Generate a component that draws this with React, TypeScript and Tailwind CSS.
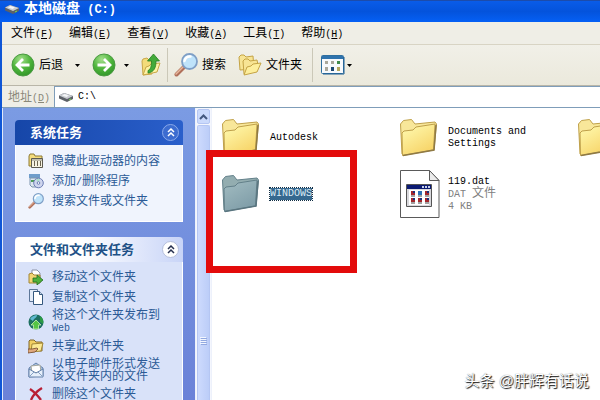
import type { ReactNode } from 'react'

// the half-width glyphs are half as wide as a Chinese character
function En({ children }: { children: ReactNode }) {
  return <span className="font-['Liberation_Mono',monospace] text-[10px] leading-none">{children}</span>
}

function DriveIcon() {
  return (
    <svg width="16" height="12" viewBox="0 0 16 12" aria-hidden="true">
      <path d="M1 4.500 6 2l9 3v3L9 11 1 7.500z" fill="#5d6168" />
      <path d="M1 4.500 6 2l9 3-6 3z" fill="#c9ccd1" />
      <path d="M4 4.500 6.500 3l4.500 1.500-2.500 1.500z" fill="#f5f6f8" />
      <path d="M11 8.500l2-1v1l-2 1z" fill="#7be04d" />
    </svg>
  )
}

function RoundArrow({ back }: { back?: boolean }) {
  return (
    <svg width="24" height="24" viewBox="0 0 24 24" aria-hidden="true">
      <defs>
        <radialGradient id={back ? 'orbBack' : 'orbNext'} cx=".4" cy=".25" r=".85">
          <stop offset="0" stopColor="#a4e08c" />
          <stop offset=".5" stopColor="#4fb53c" />
          <stop offset="1" stopColor="#2c8f25" />
        </radialGradient>
      </defs>
      <circle cx="12" cy="12" r="11" fill={back ? 'url(#orbBack)' : 'url(#orbNext)'} stroke="#4b9a42" />
      <path
        d={back ? 'M18.500 12H7M12 6 6 12l6 6' : 'M5.500 12H17M12 6l6 6-6 6'}
        fill="none"
        stroke="#fff"
        strokeWidth="2.800"
      />
    </svg>
  )
}

function UpFolderIcon() {
  return (
    <svg width="20" height="24" viewBox="0 0 20 24" aria-hidden="true">
      <path d="M2 22 1 8l1-2 4-1 2 2 3 0v14z" fill="#f3dc7a" stroke="#c9a748" />
      <path d="M2 22l3-8 3-1 2-2 9-1-3 9z" fill="#fdf3a6" stroke="#c9a748" strokeLinejoin="round" />
      <path d="M7 17.500c2.500-1 3.500-4 3.500-9.500H6.500l6-7 6 7h-3.500c0 7-2 11-8 12z" fill="#43aa3a" stroke="#24801f" strokeWidth=".8" />
    </svg>
  )
}

function SearchIcon({ size }: { size: number }) {
  return (
    <svg width={size} height={size} viewBox="0 0 24 24" aria-hidden="true">
      <path d="M2.500 21.500l8-8" stroke="#b0705a" strokeWidth="4" strokeLinecap="round" />
      <path d="M2 21l7-7" stroke="#e8b79c" strokeWidth="1.500" strokeLinecap="round" />
      <circle cx="15.500" cy="8.500" r="7.500" fill="#bfe3fa" stroke="#7f9fc6" strokeWidth="1.800" />
      <path d="M10.500 8a5 5 0 0 1 6-4.500" fill="none" stroke="#fff" strokeWidth="2.500" strokeLinecap="round" />
    </svg>
  )
}

function FoldersIcon() {
  return (
    <svg width="24" height="22" viewBox="0 0 24 22" aria-hidden="true">
      <g stroke="#c4a345" strokeLinejoin="round">
        <path d="M2 16 1 3l2-2h3l2 2 7-1 1 13z" fill="#f7e494" />
        <path d="M6 20 5 7l2-2h3l2 2 7-1 1 5" fill="#f7e494" />
        <path d="M6 21l3-8 4-1 2-2 8-1-4 9z" fill="#fdee9c" />
      </g>
    </svg>
  )
}

function ViewsIcon() {
  return (
    <svg width="24" height="20" viewBox="0 0 24 20" aria-hidden="true">
      <rect x=".5" y=".5" width="22" height="18" rx="1" fill="#f7f9fc" stroke="#2f6f9f" />
      <path d="M1 1h21v3H1z" fill="#2f73ad" />
      <path d="M23 2v17H2" fill="none" stroke="#1f5f92" />
      <path d="M4 6h3v3H4zM10 6h3v3h-3zM4 12h3v4H4z" fill="#a9a79b" />
      <path d="M16 6h3v3h-3z" fill="#3f8a4c" />
      <path d="M10 12h3v4h-3z" fill="#1b4773" />
      <path d="M16 12h3v4h-3z" fill="#b5a75c" />
    </svg>
  )
}

function Caret() {
  return (
    <svg width="5" height="3" viewBox="0 0 5 3" aria-hidden="true">
      <path d="M0 0h5L2.500 3z" fill="#000" />
    </svg>
  )
}

function BigFolder({ selected }: { selected?: boolean }) {
  return (
    <svg className="shrink-0" width="38" height="38" viewBox="0 0 38 38" aria-hidden="true">
      <defs>
        <linearGradient id={selected ? 'folderSel' : 'folder'} x1="0" y1="0" x2=".6" y2="1">
          <stop offset="0" stopColor={selected ? '#a3bdc2' : '#fffcb4'} />
          <stop offset="1" stopColor={selected ? '#7f9da8' : '#f7d468'} />
        </linearGradient>
      </defs>
      <g stroke={selected ? '#63808a' : '#bfa04a'} strokeLinejoin="round">
        <path d="M2 35 .5 5l3-3.500 8-1L15 5l20-2 1.500 2L34 31z" fill={selected ? '#93adb0' : '#f8e79a'} />
        <path d="M2.500 36.500 2 14l2-2 9-1 3-3 19-3-1.500 26z" fill={selected ? 'url(#folderSel)' : 'url(#folder)'} />
      </g>
      <path d="M3 36.500l31-5.500L36 6" fill="none" stroke={selected ? '#5a757f' : '#8f7a45'} strokeWidth="1.500" />
    </svg>
  )
}

function DatIcon() {
  return (
    <svg className="shrink-0" width="40" height="48" viewBox="0 0 40 48" aria-hidden="true">
      <path d="M.5.500h29l9.500 10v37H.5z" fill="#fff" stroke="#5a5a5a" />
      <path d="M29.500.500v10H39z" fill="#ececec" stroke="#5a5a5a" />
      <path d="M6.500 14.500h25v22h-25z" fill="#d8d8dc" stroke="#555" />
      <path d="M7 15h24v4H7z" fill="#0b1a72" />
      <path d="M22 16h2v2h-2zM25 16h2v2h-2zM28 16h2v2h-2z" fill="#c6d0ea" />
      <path d="M9 20h20v15H9z" fill="#fff" />
      <path d="M11 21h4v4h-4zM25 21h4v4h-4zM11 28h4v4h-4zM18 28h4v4h-4zM25 28h4v4h-4z" fill="#a3262c" />
      <path d="M18 21h4v4h-4z" fill="#2b6fb5" />
      <path d="M13 21h2v2h-2zM27 21h2v2h-2zM13 28h2v2h-2zM20 28h2v2h-2zM27 28h2v2h-2z" fill="#1c2f7a" />
      <path d="M11 26h4M18 26h4M25 26h4M11 33h4M18 33h4M25 33h4" stroke="#444" />
    </svg>
  )
}

function HideIcon() {
  return (
    <svg width="16" height="16" viewBox="0 0 16 16" aria-hidden="true">
      <path d="M1 13V3l1-2h4l1 2h7v10z" fill="#f4dc7c" stroke="#8e7a35" />
      <path d="M3.500 5.500h11v9h-11z" fill="#f7f3e2" stroke="#5c5a50" />
      <path d="M4 7h10" stroke="#8a8878" />
      <path d="M6.500 8v5M9.500 8v5M12.500 8v5" stroke="#6b6450" />
    </svg>
  )
}

function ProgramsIcon() {
  return (
    <svg width="16" height="16" viewBox="0 0 16 16" aria-hidden="true">
      <path d="M1 1h11v4H1z" fill="#6f9dcb" />
      <path d="M2 5h9v9H4l-2-2z" fill="#dce6ee" stroke="#7d95ad" />
      <path d="M3 7h3v2H3z" fill="#4d9b57" />
      <circle cx="10.500" cy="10" r="4.800" fill="#cfd6ee" stroke="#6c7db4" />
      <path d="M10.500 10 8 6.500a4 4 0 0 1 4-.5z" fill="#a9dccb" />
      <circle cx="10.500" cy="10" r="1.300" fill="#fff" stroke="#6c7db4" />
    </svg>
  )
}

function MoveIcon() {
  return (
    <svg width="16" height="16" viewBox="0 0 16 16" aria-hidden="true">
      <path d="M4 1l5 0 3 3v6H4z" fill="#fff" stroke="#8b93a5" />
      <path d="M1 14V5l3-1 2 2h6v8z" fill="#f3d574" stroke="#a28636" />
      <path d="M5 9h4V6l6 5-6 5v-3H5z" fill="#4fb13c" stroke="#1f6d1f" strokeWidth=".8" />
    </svg>
  )
}

function CopyIcon() {
  return (
    <svg width="16" height="16" viewBox="0 0 16 16" aria-hidden="true">
      <path d="M1.500.500h8v12h-8z" fill="#e4ecf8" stroke="#5d7799" />
      <path d="M5.500 2.500h6l3 3v10h-9z" fill="#fff" stroke="#35587e" />
      <path d="M11.500 2.500v3h3" fill="#c5d5ea" stroke="#35587e" />
    </svg>
  )
}

function PublishIcon() {
  return (
    <svg width="16" height="16" viewBox="0 0 16 16" aria-hidden="true">
      <circle cx="8" cy="8" r="7.500" fill="#1d6f60" />
      <path d="M2 5c2-3 5-4 7-4 0 3-3 3-4 6z" fill="#5fb7d0" />
      <path d="M12 2c3 2 4 5 3 8l-3-2z" fill="#2b9a45" />
      <path d="M8 6l5 5h-2.500v4h-5v-4H3z" fill="#55c545" stroke="#c6f0b3" strokeWidth=".8" />
    </svg>
  )
}

function ShareIcon() {
  return (
    <svg width="16" height="16" viewBox="0 0 16 16" aria-hidden="true">
      <path d="M1 12V3l1-1h4l2 2h6v9z" fill="#f2cf62" stroke="#80672a" />
      <path d="M4 6l11-1-2 8-10 1z" fill="#fbe893" stroke="#a28636" />
      <path d="M0 11h4l5-1 1 1-3 3-7 1z" fill="#e0a97e" stroke="#70472b" strokeWidth=".8" />
    </svg>
  )
}

function MailIcon() {
  return (
    <svg width="16" height="16" viewBox="0 0 16 16" aria-hidden="true">
      <path d="M1 6l7-5 7 5v8l-14 1z" fill="#a9c1df" stroke="#6481aa" />
      <path d="M3 4l9-1 1 7-9 1z" fill="#fff" stroke="#a8a99e" />
      <path d="M1 7l7 4 7-4v8H1z" fill="#e7f0fb" stroke="#6481aa" />
      <path d="M1 15l5-5M15 15l-5-5" stroke="#86a0c4" />
    </svg>
  )
}

function DeleteIcon() {
  return (
    <svg width="16" height="16" viewBox="0 0 16 16" aria-hidden="true">
      <path d="M2 3c5 3 8 7 11 11M14 2C9 5 5 9 3 14" fill="none" stroke="#b81f35" strokeWidth="2.400" />
    </svg>
  )
}

function Chevrons() {
  return (
    <svg width="8" height="9" viewBox="0 0 8 9" aria-hidden="true">
      <path d="M1 4l3-3 3 3M1 8l3-3 3 3" fill="none" stroke="currentColor" strokeWidth="1.500" />
    </svg>
  )
}

const MENUS = [
  { name: '文件', letter: 'F' },
  { name: '编辑', letter: 'E' },
  { name: '查看', letter: 'V' },
  { name: '收藏', letter: 'A' },
  { name: '工具', letter: 'T' },
  { name: '帮助', letter: 'H' },
]

const SYSTEM_TASKS = [
  { icon: <HideIcon />, label: '隐藏此驱动器的内容' },
  { icon: <ProgramsIcon />, label: <>添加<En>/</En>删除程序</> },
  { icon: <SearchIcon size={16} />, label: '搜索文件或文件夹' },
]

const FOLDER_TASKS = [
  { icon: <MoveIcon />, label: '移动这个文件夹' },
  { icon: <CopyIcon />, label: '复制这个文件夹' },
  { icon: <PublishIcon />, label: <>将这个文件夹发布到 <En>Web</En></> },
  { icon: <ShareIcon />, label: '共享此文件夹' },
  { icon: <MailIcon />, label: '以电子邮件形式发送该文件夹内的文件' },
  { icon: <DeleteIcon />, label: '删除这个文件夹' },
]

interface TaskListProps {
  tasks: { icon: ReactNode; label: ReactNode }[]
}

function TaskList({ tasks }: TaskListProps) {
  return (
    <ul className="flex flex-col gap-1">
      {tasks.map((t, i) => (
        <li key={i}>
          <a href="#" className="flex min-h-4 items-center gap-2 leading-3 text-[#2b5a96]">
            <span className="shrink-0">{t.icon}</span>
            <span className="w-[110px]">{t.label}</span>
          </a>
        </li>
      ))}
    </ul>
  )
}

function Sidebar() {
  return (
    <aside className="flex w-[193px] shrink-0 flex-col gap-[15px] overflow-hidden border-l border-[#dfe9fb] bg-linear-to-b from-[#7b9be3] to-[#6b82d8] px-3 pt-3">
      <section className="shrink-0">
        <div className="flex h-[25px] items-center justify-between rounded-t bg-linear-to-r from-[#1646a8] to-[#2a5fcb] pr-1 pl-[15px] text-white">
          <h2 className="text-[13px] font-bold">系统任务</h2>
          <button aria-label="收起系统任务" className="flex size-[17px] items-center justify-center rounded-full border border-[#8aa9ea] bg-[#3c6cd0]">
            <Chevrons />
          </button>
        </div>
        <div className="border border-t-0 border-white bg-[#f0f4fd] px-3 pt-2 pb-3">
          <TaskList tasks={SYSTEM_TASKS} />
        </div>
      </section>
      <section className="shrink-0">
        <div className="flex h-[25px] items-center justify-between rounded-t bg-linear-to-r from-white from-40% to-[#c8d4f7] pr-1 pl-[15px] text-[#215186]">
          <h2 className="text-[13px] font-bold">文件和文件夹任务</h2>
          <button aria-label="收起文件和文件夹任务" className="flex size-[17px] items-center justify-center rounded-full border border-[#b5bfdc] bg-white text-[#26304f]">
            <Chevrons />
          </button>
        </div>
        <div className="border border-t-0 border-white bg-[#d9e2f9] px-3 pt-[7px] pb-3">
          <TaskList tasks={FOLDER_TASKS} />
        </div>
      </section>
    </aside>
  )
}

function ScrollBar() {
  return (
    <div className="flex w-[17px] shrink-0 flex-col gap-px border-x border-[#edf1fb] bg-[#f4f6fd] px-px pt-px">
      <button aria-label="向上滚动" className="flex h-[15px] shrink-0 items-center justify-center rounded-xs border border-[#b5c6f3] bg-[#cbdafc]">
        <svg width="9" height="6" viewBox="0 0 9 6" aria-hidden="true">
          <path d="M1 5l3.500-3.500L8 5" fill="none" stroke="#45597f" strokeWidth="2" />
        </svg>
      </button>
      <div className="flex grow flex-col items-center rounded-t-xs border border-b-0 border-[#b5c6f3] bg-linear-to-r from-[#cddafd] to-[#bccdf8] pt-[211px]">
        <svg width="7" height="8" viewBox="0 0 7 8" aria-hidden="true">
          <path d="M0 .5h6M0 2.500h6M0 4.500h6M0 6.500h6" stroke="#f2f6ff" />
          <path d="M1 1.500h6M1 3.500h6M1 5.500h6M1 7.500h6" stroke="#93a9e0" />
        </svg>
      </div>
    </div>
  )
}

export default function App() {
  return (
    <div className="flex h-screen flex-col overflow-hidden bg-white font-['Liberation_Sans','Noto_Sans_CJK_SC',sans-serif] text-xs text-black">
      <header className="flex h-[22px] shrink-0 items-center gap-1 border-t border-[#1c4cab] bg-linear-to-b from-[#0a5ce8] via-[#0453dc] to-[#0560f5] pb-[6px] pl-1 text-white">
        <DriveIcon />
        <h1 className="text-sm leading-4 font-bold whitespace-pre">
          本地磁盘<span className="font-['Liberation_Mono',monospace] text-xs"> (C:)</span>
        </h1>
      </header>

      <div className="flex min-h-0 grow flex-col border-l-2 border-[#0f56d6]">
        <nav className="flex h-[23px] shrink-0 items-center gap-4 border-b border-[#d8d4c4] bg-[#efeee6] pl-[9px]">
          {MENUS.map(m => (
            <button key={m.letter} className="leading-4 whitespace-nowrap">
              {m.name}<En>(<u>{m.letter}</u>)</En>
            </button>
          ))}
        </nav>

        <div className="flex h-[41px] shrink-0 items-center border-b border-[#b9b6a8] bg-linear-to-b from-[#f1f0e8] to-[#ebe9dc] pl-[9px] whitespace-nowrap">
          <button className="flex items-center gap-1">
            <RoundArrow back />
            后退
            <span className="ml-2"><Caret /></span>
          </button>
          <button aria-label="前进" className="ml-3 flex items-center gap-2">
            <RoundArrow />
            <Caret />
          </button>
          <button aria-label="向上" className="ml-3"><UpFolderIcon /></button>
          <div className="mx-[6px] h-[34px] w-px bg-[#cbc8b8]" />
          <button className="flex items-center gap-1">
            <SearchIcon size={24} />
            搜索
          </button>
          <button className="ml-3 flex items-center gap-1">
            <FoldersIcon />
            文件夹
          </button>
          <div className="mr-2 ml-[10px] h-[34px] w-px bg-[#cbc8b8]" />
          <button aria-label="视图" className="flex items-center gap-[2px]">
            <ViewsIcon />
            <Caret />
          </button>
        </div>

        <div className="flex h-[22px] shrink-0 items-center border-b border-[#7f9db9] bg-[#efeee6] pl-[6px]">
          <label htmlFor="address" className="w-[46px] shrink-0 leading-4 whitespace-nowrap text-[#8a8879]">
            地址<En>(<u>D</u>)</En>
          </label>
          <div className="flex h-full grow items-center gap-1 border-t border-l border-[#7f9db9] bg-white pl-[3px]">
            <DriveIcon />
            <input id="address" defaultValue="C:\" className="grow bg-transparent font-['Liberation_Mono',monospace] text-[10px] outline-none" />
          </div>
        </div>

        <main className="flex min-h-0 grow">
          <Sidebar />
          <ScrollBar />
          <div className="relative min-w-0 grow pt-[2px] pl-[10px]">
            <ul className="grid grid-cols-[178px_178px_178px] auto-rows-[56px] font-['Liberation_Mono','Noto_Sans_CJK_SC',monospace] text-[10px] leading-3">
              <li className="flex items-center gap-[10px]">
                <BigFolder />
                <span>Autodesk</span>
              </li>
              <li className="flex items-center gap-[10px]">
                <BigFolder />
                <span className="w-[90px]">Documents and Settings</span>
              </li>
              <li className="flex items-center gap-[10px]">
                <BigFolder />
              </li>
              <li className="flex items-center gap-[10px]">
                <BigFolder selected />
                <span className="bg-[#36688f] text-[#dcebf5] outline-1 outline-dotted outline-[#122f45]">WINDOWS</span>
              </li>
              <li className="flex items-center gap-2">
                <DatIcon />
                <span>
                  119.dat
                  <span className="block text-[#808080]">DAT <span className="text-xs leading-3">文件</span></span>
                  <span className="block text-[#808080]">4 KB</span>
                </span>
              </li>
            </ul>
            <div className="absolute top-[42px] -left-[6px] h-[123px] w-[151px] border-7 border-[#e30b0b]" />
            <p className="absolute right-[11px] bottom-[9px] text-[15px] leading-5 text-white [text-shadow:1px_1px_1px_#111,0_0_1px_#666]">
              头条 @胖辉有话说
            </p>
          </div>
        </main>
      </div>
    </div>
  )
}
